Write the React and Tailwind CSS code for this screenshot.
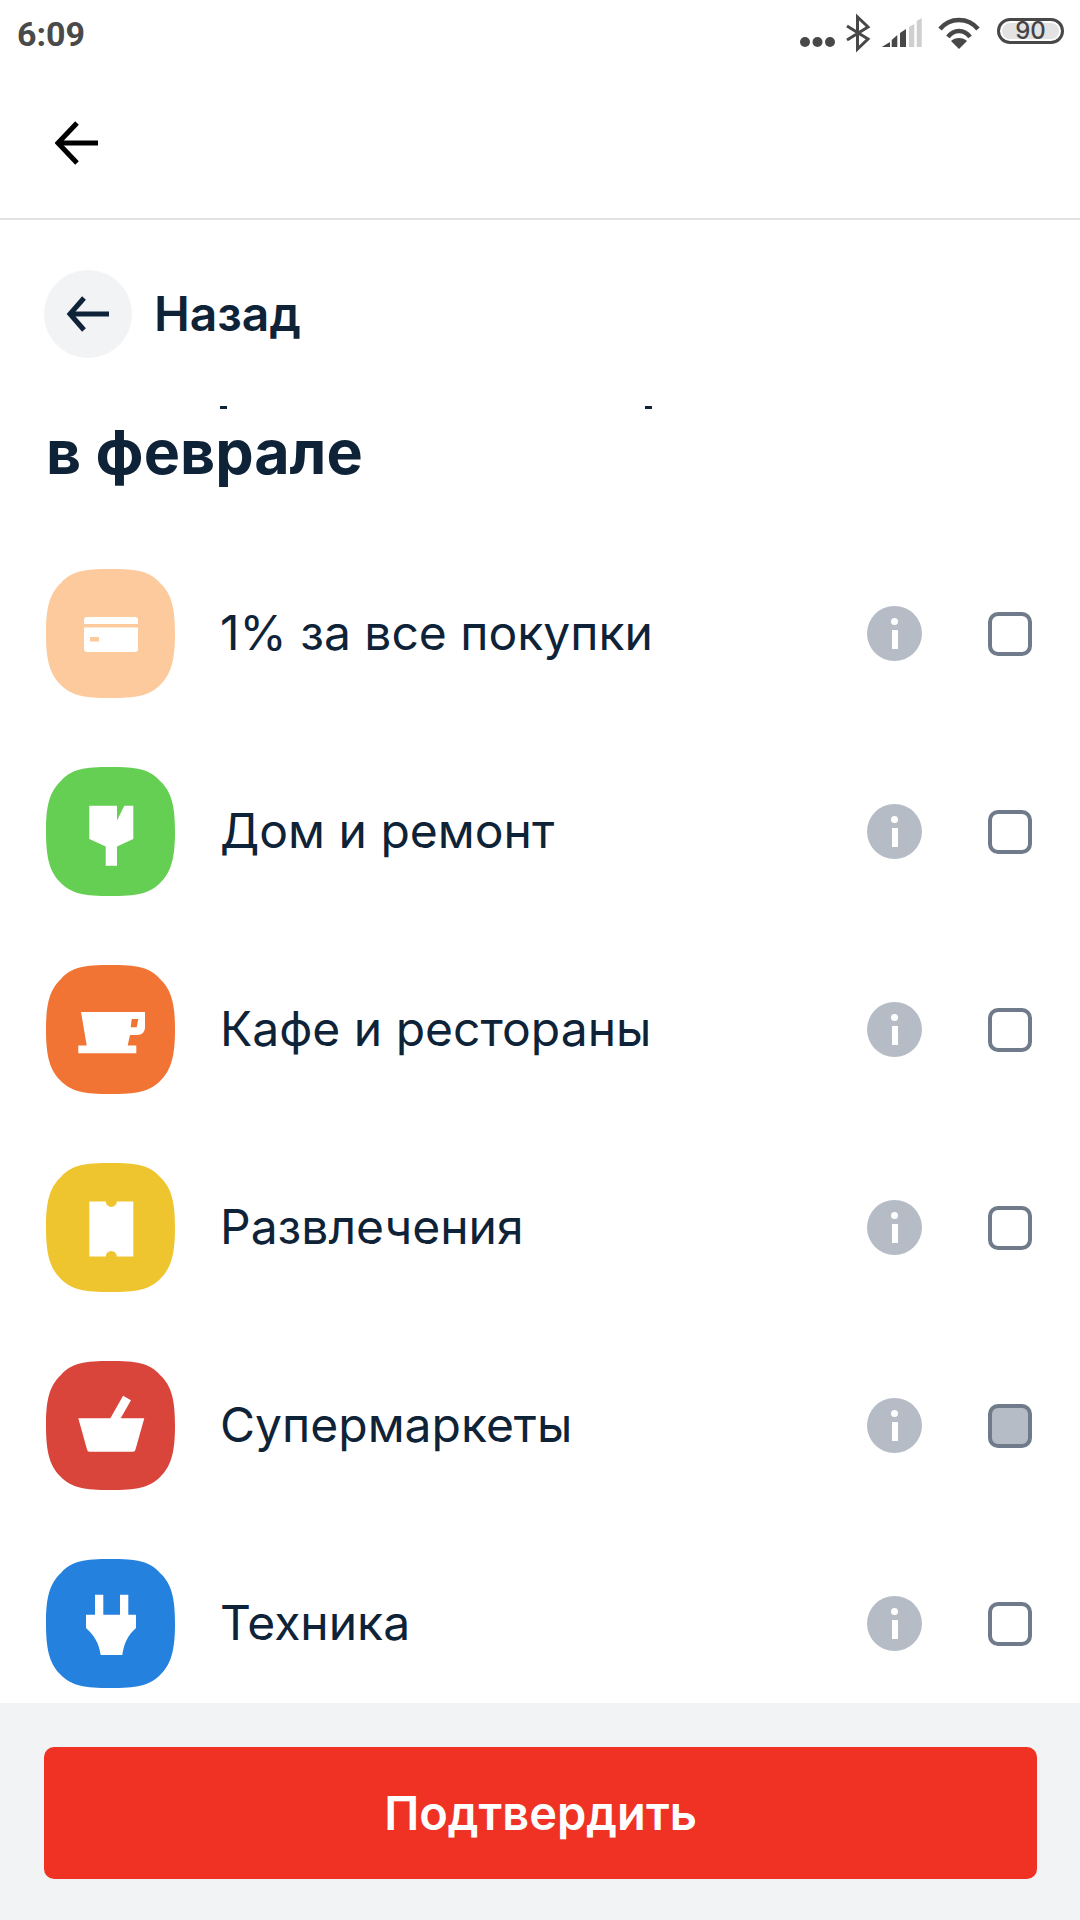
import React from "react";

const rows = [
  { title: "1% за все покупки", color: "#fdca9d", glyph: "card" },
  { title: "Дом и ремонт", color: "#65cf53", glyph: "brush" },
  { title: "Кафе и рестораны", color: "#f27434", glyph: "cup" },
  { title: "Развлечения", color: "#efc52f", glyph: "ticket" },
  { title: "Супермаркеты", color: "#d9443b", glyph: "basket", selected: true },
  { title: "Техника", color: "#2481de", glyph: "plug" },
];

function Glyph({ name, color }) {
  if (name === "card") {
    return (
      <g>
        <path d="M41 48H89a3 3 0 0 1 3 3V55H38V51a3 3 0 0 1 3-3Z" fill="#fff" />
        <path d="M38 58.5H92V80a3 3 0 0 1-3 3H41a3 3 0 0 1-3-3Z" fill="#fff" />
        <rect x="44" y="68" width="9" height="4.5" fill={color} />
      </g>
    );
  }
  if (name === "brush") {
    return <path d="M43.3 38.7H71V53.4L78.3 38.7H87.3V72L71 79.4V98.7H59.7V79.4L43.3 72Z" fill="#fff" />;
  }
  if (name === "cup") {
    return (
      <path
        fillRule="evenodd"
        d="M35 47H99V62C99 67 96 70 91 70H84L81.7 80.5H90.3V88.3H32.3V80.5H40.7ZM85.7 54L84.7 62.3H90.7L92.3 54Z"
        fill="#fff"
      />
    );
  }
  if (name === "ticket") {
    return <path d="M43.3 38.4H59.8A5.5 5.5 0 0 0 70.8 38.4H87.3V93.4H70.8A5.5 5.5 0 0 0 59.8 93.4H43.3Z" fill="#fff" />;
  }
  if (name === "basket") {
    return (
      <g>
        <path d="M68 60L81 37" stroke="#fff" strokeWidth="9" />
        <path d="M32.3 57.3H98.3L89.5 88.5Q89 90.7 87 90.7H43.5Q41.5 90.7 41 88.5Z" fill="#fff" />
      </g>
    );
  }
  return (
    <path
      d="M49 35.7H57.3V55.7H74V35.7H82.3V55.7H90V69C82 76 78 84 76.3 96H54.7C53 84 48 76 40 69V55.7H49Z"
      fill="#fff"
    />
  );
}

function CategoryIcon({ color, glyph }) {
  return (
    <svg width="129" height="129" viewBox="0 0 129 129" className="shrink-0">
      <path
        d="M64.5 0C90 0 104 2 114 14C126 25 129 40 129 64.5C129 89 126 104 115 115C104 127 90 129 64.5 129C39 129 25 127 14 115C3 104 0 89 0 64.5C0 40 3 25 15 14C25 2 39 0 64.5 0Z"
        fill={color}
      />
      <Glyph name={glyph} color={color} />
    </svg>
  );
}

function InfoIcon() {
  return (
    <div className="w-[55px] h-[55px] rounded-full bg-[#b5bcc5] flex flex-col items-center justify-center gap-[5px] shrink-0">
      <div className="w-[7px] h-[7px] rounded-full bg-white" />
      <div className="w-[6px] h-[19px] bg-white" />
    </div>
  );
}

function StatusBar() {
  return (
    <div className="h-[68px] pb-[8px] flex items-center justify-between pl-[17px] pr-[16px] text-[#4a4a4a] shrink-0">
      <span className="mt-[7px] text-[34px] font-bold leading-none" style={{ fontFamily: "Roboto, sans-serif" }}>
        6:09
      </span>
      <div className="flex items-center">
        <svg width="180" height="60" viewBox="0 0 180 60" fill="#484848">
          <circle cx="5" cy="42" r="5" />
          <circle cx="17.5" cy="42" r="5" />
          <circle cx="30" cy="42" r="5" />
          <path d="M47 26L68 39L57.5 49V17L68 27L47 40" fill="none" stroke="#484848" strokeWidth="3" />
          <path d="M81.7 47L90 42V47ZM91.7 40L97.3 35V47H91.7ZM100 33L106 29V47H100Z" />
          <path d="M109 27L114.3 24V47H109ZM116.7 21L121.7 18V47H116.7Z" fill="#cfcfcf" />
          <g fill="none" stroke="#484848" strokeWidth="4.5">
            <path d="M140 29C150 17 168 17 178 29" />
            <path d="M148 37C154 29 164 29 170 37" />
          </g>
          <path d="M159 49L151 41C155 37 163 37 167 41Z" />
        </svg>
        <div className="ml-[17px] mt-[2px] w-[67px] h-[26px] rounded-full border-[3px] border-[#484848] p-[2px] flex">
          <div className="flex-1 rounded-full bg-[#e3e3e3] flex items-center justify-center text-[24px] font-medium text-[#444] leading-none">
            90
          </div>
        </div>
      </div>
    </div>
  );
}

export default function App() {
  return (
    <div
      className="w-[1080px] h-[1920px] bg-white flex flex-col overflow-hidden text-[#0f2338]"
      style={{ fontFamily: "Inter, Roboto, sans-serif" }}
    >
      <StatusBar />

      {/* app bar */}
      <div className="h-[152px] border-b-2 border-[#e2e2e2] flex items-center pl-[55px] shrink-0">
        <svg width="44" height="44" viewBox="0 0 44 44" fill="none" stroke="#000" strokeWidth="5">
          <path d="M43 22H3" />
          <path d="M22 2L3 22L22 42" />
        </svg>
      </div>

      <div className="flex-1 min-h-0 flex flex-col">
        <div className="flex items-center gap-[22px] pl-[44px] pt-[50px] shrink-0">
          <div className="w-[88px] h-[88px] rounded-full bg-[#f2f3f5] flex items-center justify-center">
            <svg width="44" height="36" viewBox="0 0 44 36" fill="none" stroke="#0f2338" strokeWidth="5">
              <path d="M43 18H4" />
              <path d="M18 2L4 18L18 34" />
            </svg>
          </div>
          <span className="text-[48px] font-semibold leading-none">Назад</span>
        </div>

        {/* heading, first line is cut off in the source */}
        <div className="relative pl-[46px] pt-[58px] shrink-0">
          <div className="absolute left-[220px] top-[48px] w-[7px] h-[3px] bg-[#0f2338]" />
          <div className="absolute left-[645px] top-[48px] w-[7px] h-[3px] bg-[#0f2338]" />
          <h1 className="text-[61px] font-bold leading-[72px]">в феврале</h1>
        </div>

        <div className="pt-[46px]">
          {rows.map((row) => (
            <div key={row.title} className="h-[198px] flex items-center pl-[46px] pr-[48px]">
              <CategoryIcon color={row.color} glyph={row.glyph} />
              <span className="ml-[45px] flex-1 text-[48px] leading-none">{row.title}</span>
              <InfoIcon />
              <div
                className={
                  row.selected
                    ? "ml-[66px] mt-[2px] w-[44px] h-[44px] rounded-[10px] border-[4px] border-[#6f7b8a] bg-[#b5bcc5]"
                    : "ml-[66px] mt-[2px] w-[44px] h-[44px] rounded-[10px] border-[4px] border-[#6f7b8a] bg-white"
                }
              />
            </div>
          ))}
        </div>
      </div>

      {/* footer */}
      <div className="h-[217px] bg-[#f2f3f5] pt-[44px] pl-[44px] pr-[43px] shrink-0">
        <button className="w-full h-[132px] rounded-[10px] bg-[#ef3224] text-white text-[47px] font-semibold">
          Подтвердить
        </button>
      </div>
    </div>
  );
}
